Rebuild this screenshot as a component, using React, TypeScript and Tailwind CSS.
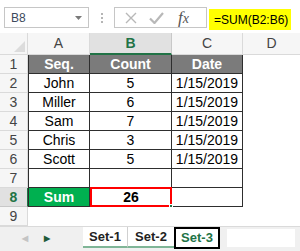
import React from 'react';

const rows = [
  { seq: 'John', count: '5', date: '1/15/2019' },
  { seq: 'Miller', count: '6', date: '1/15/2019' },
  { seq: 'Sam', count: '7', date: '1/15/2019' },
  { seq: 'Chris', count: '3', date: '1/15/2019' },
  { seq: 'Scott', count: '5', date: '1/15/2019' },
];

const RowHead: React.FC<{ n: number; active?: boolean }> = ({ n, active }) => (
  <div
    className={
      'w-[28px] shrink-0 flex items-center justify-center border-r border-b text-[14px] ' +
      (active
        ? 'bg-[#e1e1e1] text-[#217346] border-r-[#217346] border-b-[#c8c8c8] font-bold'
        : 'bg-[#f6f6f6] text-[#444] border-[#dadada]')
    }
  >
    {n}
  </div>
);

const FormulaBar: React.FC = () => (
  <div className="h-[33px] flex items-start pt-[7px] pl-[4px] bg-white">
    <div className="w-[85px] h-[21px] border border-[#c6c6c6] flex items-center justify-between pl-[6px] pr-[6px] text-[12px] text-[#3d4a5c]">
      <span>B8</span>
      <svg width="7" height="4" viewBox="0 0 7 4"><path d="M0 0h7L3.5 4z" fill="#7a7a7a" /></svg>
    </div>
    <div className="w-[25px] h-[21px] flex flex-col items-center justify-center gap-[2px]">
      <span className="w-[2px] h-[2px] bg-[#b5b5b5]" />
      <span className="w-[2px] h-[2px] bg-[#b5b5b5]" />
      <span className="w-[2px] h-[2px] bg-[#b5b5b5]" />
    </div>
    <div className="w-[93px] h-[21px] border border-[#c6c6c6] flex items-center pl-[10px]">
      <svg width="12" height="12" viewBox="0 0 12 12">
        <path d="M1 1l10 10M11 1L1 11" stroke="#b8b8b8" strokeWidth="1.4" fill="none" />
      </svg>
      <svg width="15" height="12" viewBox="0 0 15 12" className="ml-[12px]">
        <path d="M1 6.5l4.5 4.5L14 1" stroke="#b8b8b8" strokeWidth="2.2" fill="none" />
      </svg>
      <span className="ml-[14px] text-[17px] italic text-[#555] font-['Liberation_Serif',serif] leading-none">
        <span className="italic">f</span>
        <span className="text-[14px]">x</span>
      </span>
    </div>
    <div className="ml-[2px] mt-[2px] w-[82px] h-[21px] bg-[#ffff00] flex items-center pl-[5px] text-[12px] text-black">
      =SUM(B2:B6)
    </div>
  </div>
);

const App: React.FC = () => {
  return (
    <div className="w-[300px] h-[251px] bg-white overflow-hidden font-['Liberation_Sans',Arial,sans-serif] flex flex-col">
      <FormulaBar />

      {/* column headers */}
      <div className="h-[22px] flex text-[14px] text-[#444]">
        <div className="w-[28px] shrink-0 border-r border-b border-[#dadada] bg-[#f6f6f6] flex items-end justify-end p-[2px]">
          <svg width="11" height="11" viewBox="0 0 11 11"><path d="M11 0v11H0z" fill="#dcdcdc" /></svg>
        </div>
        <div className="w-[62px] shrink-0 border-r border-b border-[#dadada] bg-[#f6f6f6] flex items-center justify-center">A</div>
        <div className="w-[82px] shrink-0 border-r border-[#c8c8c8] border-b-2 border-b-[#217346] bg-[#e1e1e1] flex items-center justify-center text-[#217346] font-bold">B</div>
        <div className="w-[71px] shrink-0 border-r border-b border-[#dadada] bg-[#f6f6f6] flex items-center justify-center">C</div>
        <div className="flex-1 border-b border-[#dadada] bg-[#f6f6f6] flex items-center justify-center">D</div>
      </div>

      {/* row 1 header */}
      <div className="h-[19px] flex text-[14px]">
        <RowHead n={1} />
        <div className="w-[62px] shrink-0 bg-[#7b7b7b] border-l border-r border-b border-[#2e2e2e] text-white font-bold flex items-center justify-center">Seq.</div>
        <div className="w-[82px] shrink-0 bg-[#7b7b7b] border-r border-b border-[#2e2e2e] text-white font-bold flex items-center justify-center">Count</div>
        <div className="w-[71px] shrink-0 bg-[#7b7b7b] border-r border-b border-[#2e2e2e] text-white font-bold flex items-center justify-center">Date</div>
        <div className="flex-1" />
      </div>

      {rows.map((r, i) => (
        <div key={r.seq} className="h-[19px] flex text-[14px] text-black">
          <RowHead n={i + 2} />
          <div className="w-[62px] shrink-0 border-l border-r border-b border-[#2e2e2e] flex items-center justify-center">{r.seq}</div>
          <div className="w-[82px] shrink-0 border-r border-b border-[#2e2e2e] flex items-center justify-center">{r.count}</div>
          <div className="w-[71px] shrink-0 border-r border-b border-[#2e2e2e] flex items-center justify-center">{r.date}</div>
          <div className="flex-1" />
        </div>
      ))}

      {/* row 7 empty */}
      <div className="h-[19px] flex text-[14px]">
        <RowHead n={7} />
        <div className="w-[62px] shrink-0 border-l border-r border-b border-[#2e2e2e]" />
        <div className="w-[82px] shrink-0 border-r border-b border-[#2e2e2e]" />
        <div className="w-[71px] shrink-0 border-r border-b border-[#2e2e2e]" />
        <div className="flex-1" />
      </div>

      {/* row 8 sum */}
      <div className="h-[19px] flex text-[14px]">
        <RowHead n={8} active />
        <div className="w-[62px] shrink-0 bg-[#00b050] border-l border-r border-b border-[#2e2e2e] text-white font-bold flex items-center justify-center">Sum</div>
        <div className="relative w-[82px] shrink-0 border-2 border-[#ff0000] -mt-[1px] h-[20px] font-bold text-black flex items-center justify-center">
          26
          <span className="absolute -right-[3px] -bottom-[3px] w-[4px] h-[4px] bg-[#217346] border border-white" />
        </div>
        <div className="w-[71px] shrink-0 border-r border-b border-[#2e2e2e]" />
        <div className="flex-1" />
      </div>

      {/* row 9 */}
      <div className="h-[19px] flex text-[14px]">
        <RowHead n={9} />
        <div className="flex-1" />
      </div>

      {/* sheet tabs */}
      <div className="flex-1 bg-[#f0f0f0] border-t border-[#dadada] flex items-start text-[13px] font-bold">
        <div className="w-[83px] h-full flex items-center">
          <span className="ml-[22px] text-[8px] text-[#c4c4c4]">◀</span>
          <span className="ml-[16px] text-[8px] text-[#1e5b3a]">▶</span>
        </div>
        <div className="w-[45px] h-[21px] bg-white border-r border-[#d0d0d0] border-b-2 border-b-[#7fb597] flex items-center justify-center text-[#222]">Set-1</div>
        <div className="w-[46px] h-[21px] bg-white border-b-2 border-b-[#7fb597] flex items-center justify-center text-[#222]">Set-2</div>
        <div className="w-[46px] h-[22px] bg-white border-2 border-black flex items-center justify-center text-[#217346]">Set-3</div>
        <div className="ml-[7px] mt-[2px] w-[68px] h-[18px] bg-white" />
      </div>
    </div>
  );
};

export default App;
